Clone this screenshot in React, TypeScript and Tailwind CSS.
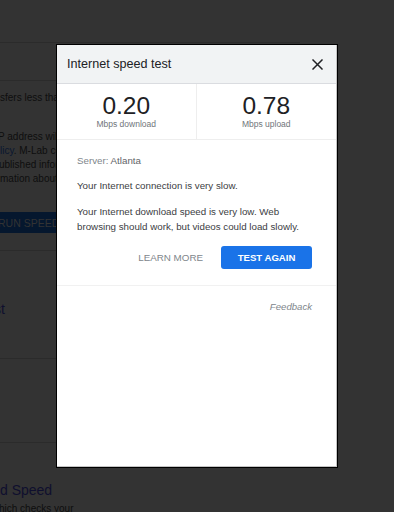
import React from "react";

const font = { fontFamily: '"Liberation Sans", Arial, sans-serif' };

function Background() {
  return (
    <div className="h-[512px] w-[394px] bg-[#333333] text-[#0e0e0e] overflow-hidden" style={font}>
      <div className="w-[300px] overflow-hidden">
        <div className="h-[43px] border-b border-[#2b2b2b]" />
        <div className="h-[38px] border-b border-[#2b2b2b]" />
        <div className="pt-[10px] pb-[17px] border-b border-[#2b2b2b] text-[10px] leading-[14px]">
          <div className="whitespace-nowrap">sfers less than 40 MB of data, but may transfer more</div>
          <div className="mt-[25px]">
            <div className="whitespace-nowrap -ml-[2px]">P address will be shared with them and processed</div>
            <div className="whitespace-nowrap">
              <span className="text-[#0a1730]">licy</span>. M-Lab conducts the test and publicly
            </div>
            <div className="whitespace-nowrap -ml-[1px]">ublished information includes your IP address</div>
            <div className="whitespace-nowrap">mation about you as an Internet user.</div>
          </div>
          <div className="mt-[26px] h-[21px] w-[200px] -ml-[2px] bg-[#05172e] text-[#333333] flex items-center whitespace-nowrap text-[10.5px]">
            RUN SPEED TEST
          </div>
        </div>
        <div className="h-[108px] border-b border-[#2b2b2b] pt-[49px]">
          <div className="text-[14px] leading-[18px] text-[#0f0f2e] whitespace-nowrap -ml-[6px]">st</div>
        </div>
        <div className="h-[84px] border-b border-[#2b2b2b]" />
        <div className="pt-[38px]">
          <div className="text-[14px] leading-[18px] text-[#0f0f2e] whitespace-nowrap">d Speed</div>
          <div className="mt-[3px] text-[10px] leading-[14px] whitespace-nowrap -ml-[1px]">hich checks your</div>
        </div>
      </div>
    </div>
  );
}

function CloseIcon() {
  return (
    <svg width="11" height="11" viewBox="0 0 11 11" className="block">
      <path d="M1 1 L10 10 M10 1 L1 10" stroke="#202124" strokeWidth="1.5" strokeLinecap="square" />
    </svg>
  );
}

export default function App() {
  return (
    <div className="relative h-[512px] w-[394px] overflow-hidden">
      <Background />
      <div className="fixed inset-0 flex items-center justify-center" style={font}>
        <div className="w-[282px] h-[424px] bg-white border border-black">
          <div className="h-full flex flex-col border-r border-b border-[#c4c4c4]">
            <div className="h-[39px] shrink-0 bg-[#f1f3f4] border-b border-[#dadce0] flex items-center justify-between pl-[10px] pr-[13px]">
              <span className="text-[12.6px] text-[#202124]">Internet speed test</span>
              <CloseIcon />
            </div>
            <div className="h-[56px] shrink-0 grid grid-cols-2 border-b border-[#eeeeee]">
              <div className="flex flex-col items-center justify-center border-r border-[#eeeeee]">
                <div className="text-[24.5px] leading-[24px] text-[#202124]">0.20</div>
                <div className="text-[8.5px] leading-[10px] text-[#70757a] mt-[1px]">Mbps download</div>
              </div>
              <div className="flex flex-col items-center justify-center">
                <div className="text-[24.5px] leading-[24px] text-[#202124]">0.78</div>
                <div className="text-[8.5px] leading-[10px] text-[#70757a] mt-[1px]">Mbps upload</div>
              </div>
            </div>
            <div className="pl-[20px] pr-[24px] pt-[13px] pb-[16px] border-b border-[#f1f1f1] text-[9.75px] leading-[15px] text-[#3c4043]">
              <div>
                <span className="text-[#80868b]">Server: </span>
                <span className="text-[#5f6368]">Atlanta</span>
              </div>
              <div className="mt-[10px]">Your Internet connection is very slow.</div>
              <div className="mt-[11px]">
                Your Internet download speed is very low. Web browsing should work, but videos could load slowly.
              </div>
              <div className="mt-[12px] flex items-center justify-end gap-[18px]">
                <span className="text-[#80868b] text-[9.8px]">LEARN MORE</span>
                <div className="w-[91px] h-[23px] rounded-[3px] bg-[#1a73e8] text-white font-bold text-[9.6px] flex items-center justify-center">
                  TEST AGAIN
                </div>
              </div>
            </div>
            <div className="pl-[20px] pr-[24px] pt-[13px] flex justify-end">
              <span className="italic text-[9.6px] leading-[15px] text-[#80868b]">Feedback</span>
            </div>
          </div>
        </div>
      </div>
    </div>
  );
}
